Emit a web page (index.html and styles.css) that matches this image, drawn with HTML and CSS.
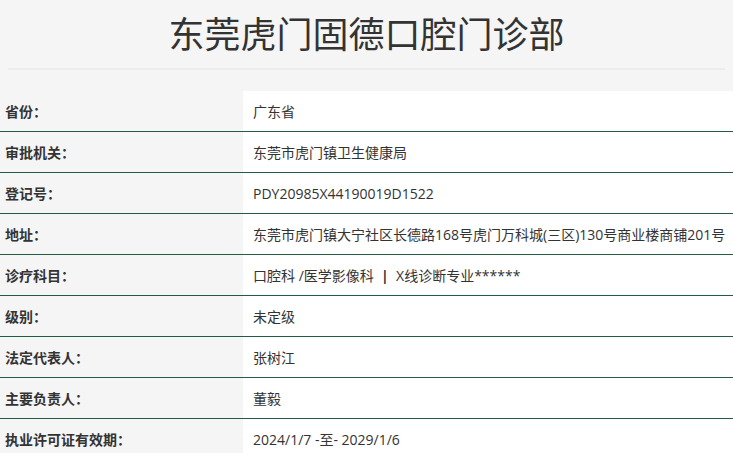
FILE: index.html
```html
<!DOCTYPE html>
<html lang="zh-CN">
<head>
<meta charset="utf-8">
<title>东莞虎门固德口腔门诊部</title>
<link rel="stylesheet" href="styles.css">
</head>
<body>
<header class="head">
  <h1 class="title">东莞虎门固德口腔门诊部</h1>
  <div class="sep"></div>
</header>
<table class="info">
  <tr><th>省份：</th><td>广东省</td></tr>
  <tr><th>审批机关：</th><td>东莞市虎门镇卫生健康局</td></tr>
  <tr><th>登记号：</th><td>PDY20985X44190019D1522</td></tr>
  <tr><th>地址：</th><td>东莞市虎门镇大宁社区长德路168号虎门万科城(三区)130号商业楼商铺201号</td></tr>
  <tr><th>诊疗科目：</th><td>口腔科 /医学影像科 &nbsp;<span class="bar">|</span>&nbsp; X线诊断专业******</td></tr>
  <tr><th>级别：</th><td>未定级</td></tr>
  <tr><th>法定代表人：</th><td>张树江</td></tr>
  <tr><th>主要负责人：</th><td>董毅</td></tr>
  <tr><th>执业许可证有效期：</th><td>2024/1/7 -至- 2029/1/6</td></tr>
</table>
</body>
</html>
```
FILE: styles.css
```css
html, body {
  margin: 0;
  padding: 0;
  background: #f5f5f5;
  font-family: "Open Sans", "Noto Sans CJK SC", sans-serif;
  color: #333;
}
.head {
  padding: 0 8px;
}
.title {
  margin: 0;
  height: 68px;
  line-height: 64px;
  font-family: "Noto Sans CJK SC", sans-serif;
  font-size: 36px;
  font-weight: normal;
  text-align: center;
  color: #333;
}
.sep {
  height: 2px;
  background: #ececec;
}
.info {
  margin-top: 21px;
  width: 100%;
  border-collapse: collapse;
}
.info tr {
  border-bottom: 1px solid #245c42;
}
.info th {
  width: 238px;
  padding: 0 0 0 5px;
  height: 40px;
  text-align: left;
  font-family: "Noto Sans CJK SC", sans-serif;
  font-size: 14px;
  font-weight: bold;
  background: #f5f5f5;
  color: #333;
  white-space: nowrap;
}
.info td {
  padding: 0 0 0 10px;
  height: 40px;
  font-size: 14px;
  background: #fff;
  color: #333;
  white-space: nowrap;
}
.bar {
  font-weight: bold;
}
```
